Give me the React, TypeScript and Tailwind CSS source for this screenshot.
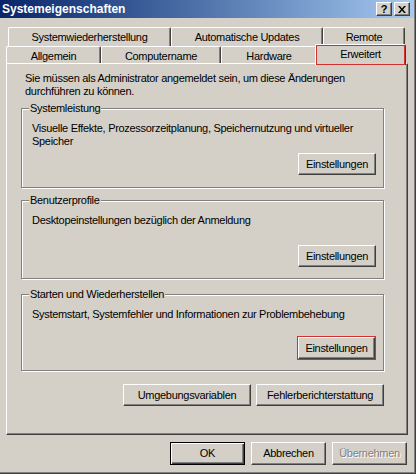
import React from "react";

function Btn({
  children,
  className = "",
}: {
  children: React.ReactNode;
  className?: string;
}) {
  return (
    <div
      className={
        "flex items-center justify-center bg-[#d4d0c8] border border-t-white border-l-white border-r-[#404040] border-b-[#404040] shadow-[inset_-1px_-1px_0_#808080] " +
        className
      }
    >
      {children}
    </div>
  );
}

function Group({
  label,
  className = "",
  children,
}: {
  label: string;
  className?: string;
  children: React.ReactNode;
}) {
  return (
    <div
      className={
        "relative ml-[14px] w-[363px] border border-[#808080] shadow-[inset_1px_1px_0_#fff,1px_1px_0_#fff] " +
        className
      }
    >
      <span className="absolute left-[7px] top-[-7px] px-[1px] bg-[#d4d0c8] leading-[13px] whitespace-nowrap">
        {label}
      </span>
      {children}
    </div>
  );
}

function Tab({
  children,
  className = "",
}: {
  children: React.ReactNode;
  className?: string;
}) {
  return (
    <div
      className={
        "flex justify-center bg-[#d4d0c8] border-l border-t border-r border-l-white border-t-white border-r-[#404040] shadow-[inset_-1px_0_0_#808080] rounded-tl-[2px] rounded-tr-[2px] whitespace-nowrap " +
        className
      }
    >
      {children}
    </div>
  );
}

export default function App() {
  return (
    <div className="w-[416px] h-[474px] overflow-hidden bg-[#d4d0c8] border-r border-b border-[#404040] font-['Liberation_Sans',Arial,sans-serif] text-[11px] leading-[13px] tracking-[-0.3px] text-black">
      <div className="h-full border-r border-b border-[#808080] flex flex-col">
        {/* Title bar */}
        <div className="h-[18px] shrink-0 flex items-center pl-[2px] pr-[4px] bg-linear-to-r from-[#0a246a] to-[#a6caf0]">
          <span className="text-white font-bold text-[12px] tracking-normal leading-[18px]">
            Systemeigenschaften
          </span>
          <div className="ml-auto flex gap-[2px]">
            <Btn className="w-[16px] h-[14px]">
              <span className="font-bold text-[11px] leading-[11px] tracking-normal">?</span>
            </Btn>
            <Btn className="w-[16px] h-[14px]">
              <svg width="8" height="7" viewBox="0 0 8 7">
                <path
                  d="M0 0h2l2 2.4L6 0h2L5 3.5 8 7H6L4 4.6 2 7H0l3-3.5z"
                  fill="#000"
                />
              </svg>
            </Btn>
          </div>
        </div>

        {/* Tabs */}
        <div className="mt-[9px] shrink-0">
          <div className="flex pl-[8px] h-[19px]">
            <Tab className="w-[163px] h-[19px] pt-[3px]">Systemwiederherstellung</Tab>
            <Tab className="w-[152px] h-[19px] pt-[3px]">Automatische Updates</Tab>
            <Tab className="w-[82px] h-[19px] pt-[3px]">Remote</Tab>
          </div>
          <div className="flex pl-[6px] h-[17px]">
            <Tab className="w-[95px] h-[17px] pt-[3px]">Allgemein</Tab>
            <Tab className="w-[120px] h-[17px] pt-[3px]">Computername</Tab>
            <Tab className="w-[96px] h-[17px] pt-[3px]">Hardware</Tab>
            <Tab className="relative z-10 w-[91px] h-[21px] -mt-[2px] -ml-[2px] pt-[3px]">
              Erweitert
              <span className="absolute inset-0 border border-[#d22f2f] pointer-events-none" />
            </Tab>
          </div>
        </div>

        {/* Panel */}
        <div className="ml-[6px] w-[402px] h-[372px] shrink-0 border-l border-t border-l-white border-t-white border-r border-b border-r-[#404040] border-b-[#404040] shadow-[inset_-1px_-1px_0_#808080]">
          <p className="mt-[8px] ml-[18px]">
            Sie müssen als Administrator angemeldet sein, um diese Änderungen
            <br />
            durchführen zu können.
          </p>

          <Group label="Systemleistung" className="mt-[10px] h-[80px]">
            <div className="pt-[13px] pl-[10px] h-[39px]">
              Visuelle Effekte, Prozessorzeitplanung, Speichernutzung und virtueller
              <br />
              Speicher
            </div>
            <div className="flex justify-end pr-[7px] mt-[5px]">
              <Btn className="w-[78px] h-[22px]">Einstellungen</Btn>
            </div>
          </Group>

          <Group label="Benutzerprofile" className="mt-[12px] h-[79px]">
            <div className="pt-[13px] pl-[10px] h-[39px]">
              Desktopeinstellungen bezüglich der Anmeldung
            </div>
            <div className="flex justify-end pr-[7px] mt-[5px]">
              <Btn className="w-[78px] h-[22px]">Einstellungen</Btn>
            </div>
          </Group>

          <Group label="Starten und Wiederherstellen" className="mt-[15px] h-[77px]">
            <div className="pt-[13px] pl-[10px] h-[39px]">
              Systemstart, Systemfehler und Informationen zur Problembehebung
            </div>
            <div className="flex justify-end pr-[8px] mt-[3px]">
              <Btn className="w-[77px] h-[22px] outline outline-1 outline-[#d22f2f]">
                Einstellungen
              </Btn>
            </div>
          </Group>

          <div className="mt-[13px] ml-[14px] w-[363px] flex justify-end gap-[5px]">
            <Btn className="w-[128px] h-[22px]">Umgebungsvariablen</Btn>
            <Btn className="w-[128px] h-[22px]">Fehlerberichterstattung</Btn>
          </div>
        </div>

        {/* Dialog buttons */}
        <div className="mt-[7px] flex justify-end gap-[6px] pr-[7px]">
          <div className="w-[75px] h-[23px] flex items-center justify-center bg-[#d4d0c8] border border-black shadow-[inset_1px_1px_0_#fff,inset_-1px_-1px_0_#404040,inset_-2px_-2px_0_#808080]">
            OK
          </div>
          <Btn className="w-[75px] h-[23px]">Abbrechen</Btn>
          <Btn className="w-[75px] h-[23px] text-[#808080] [text-shadow:1px_1px_0_#fff]">
            Übernehmen
          </Btn>
        </div>
      </div>
    </div>
  );
}
